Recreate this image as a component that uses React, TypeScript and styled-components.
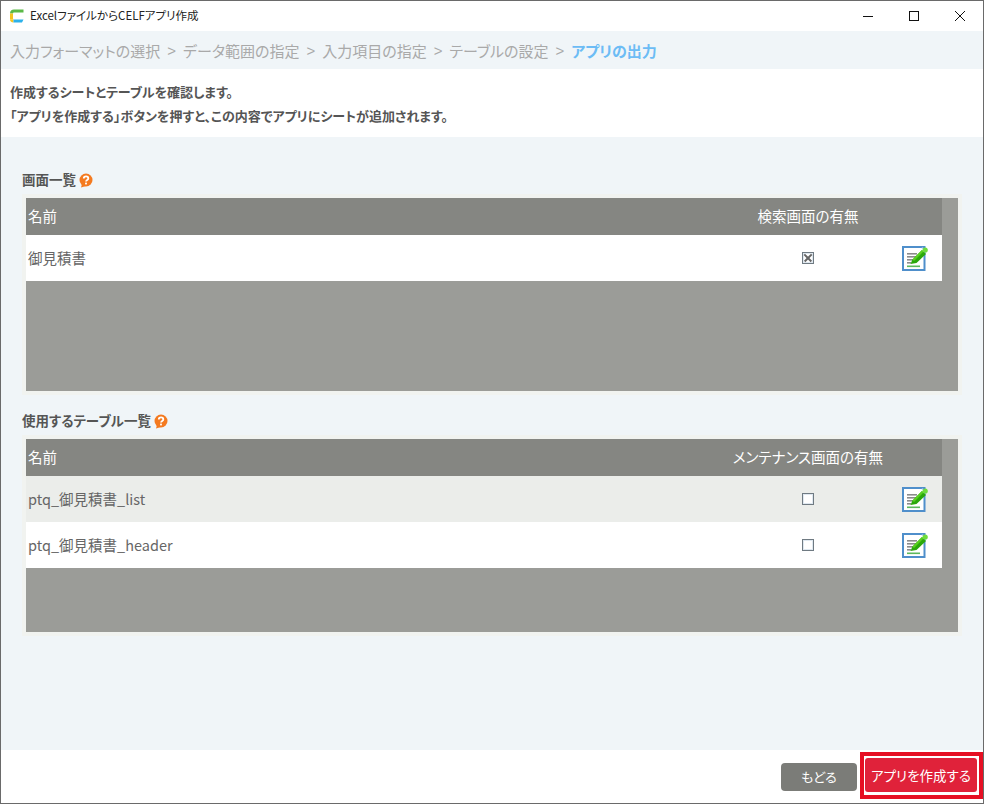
import * as React from "react"
import styled, {createGlobalStyle} from "styled-components";

const FONT = `"Noto Sans CJK JP", "Noto Sans", sans-serif`

const screens = [
  {name: '御見積書', checked: true},
]

const tables = [
  {name: 'ptq_御見積書_list', checked: false},
  {name: 'ptq_御見積書_header', checked: false},
]

const steps = ['入力フォーマットの選択', 'データ範囲の指定', '入力項目の指定', 'テーブルの設定']

const GlobalStyle = createGlobalStyle`
  html, body {
    margin: 0;
    padding: 0;
    background: #fff;
  }
  body {
    font-family: ${FONT};
    font-feature-settings: "palt";
  }
`

const LogoIcon = () => (
  <svg width="16" height="16" viewBox="0 0 16 16" style={{display: 'block'}}>
    <path d="M5 1.5 H14.5 V4.5 H4.5 L4 5.5 H1 C1 3 2.5 1.5 5 1.5Z" fill="#5bb947" />
    <path d="M1 5.5 H4 V10.5 L4.5 11.5 H1 Z" fill="#f4c41f" />
    <path d="M1 11.5 H4.5 V14.5 C2.5 14.5 1 13.5 1 11.5Z" fill="#f4c41f" />
    <path d="M4.5 11.5 H14.5 L13 14.5 H4.5Z" fill="#2cb1ea" />
  </svg>
)

const HelpIcon = () => (
  <svg width="14" height="15" viewBox="0 0 14 15" style={{display: 'block'}}>
    <path d="M3 11 L2 14.5 L7 13 Z" fill="#f47a20" />
    <circle cx="7" cy="7" r="6.5" fill="#f47a20" />
    <path d="M4.8 5.4 C4.8 2.8 9.3 2.8 9.3 5.4 C9.3 7 7 6.9 7 8.6" fill="none" stroke="#fff" strokeWidth="1.8" />
    <rect x="6.1" y="9.6" width="1.8" height="1.8" fill="#fff" />
  </svg>
)

const EditIcon = () => (
  <svg width="26" height="26" viewBox="0 0 26 26" style={{display: 'block'}}>
    <rect x="1" y="2" width="21.5" height="23" fill="#fff" stroke="#4f8fcb" strokeWidth="2" />
    <rect x="5" y="8" width="10" height="1.6" fill="#8b8b8b" />
    <rect x="5" y="11" width="10" height="1.6" fill="#8b8b8b" />
    <rect x="5" y="14" width="7" height="1.6" fill="#8b8b8b" />
    <rect x="5" y="17" width="4" height="1.6" fill="#8b8b8b" />
    <rect x="5" y="20.5" width="13" height="1.6" fill="#5cb85c" />
    <path d="M8.5 19 L10.5 14.5 L20 5 L24 9 L14.5 18 Z" fill="#2aa80a" />
    <path d="M10.5 14.5 L20 5 L21.5 6.5 L12 16 Z" fill="#58d01e" />
    <path d="M19.5 3 L20.5 2 L21.5 3 L20.5 4 Z" fill="#9fc4e6" />
    <circle cx="23.2" cy="5" r="2.6" fill="#6fdc3c" />
  </svg>
)

const TableBlock = ({title, column, rows, bodyHeight}: {title: string, column: string, rows: {name: string, checked: boolean}[], bodyHeight: number}) => (
  <Section>
    <SectionTitle>{title}<HelpIcon /></SectionTitle>
    <TableFrame>
      <TableInner $height={bodyHeight}>
        <HeaderRow>
          <NameCell>名前</NameCell>
          <FlagCell>{column}</FlagCell>
          <ActionCell />
        </HeaderRow>
        {rows.map((row, i) => (
          <Row key={row.name} $striped={rows.length > 1 && i === 0}>
            <NameCell>{row.name}</NameCell>
            <FlagCell><CheckBox $checked={row.checked} /></FlagCell>
            <ActionCell><EditIcon /></ActionCell>
          </Row>
        ))}
      </TableInner>
    </TableFrame>
  </Section>
)

const App = () => {
  return (
    <Window>
      <GlobalStyle />
      <TitleBar>
        <TitleLeft>
          <LogoIcon />
          <TitleText>ExcelファイルからCELFアプリ作成</TitleText>
        </TitleLeft>
        <WindowButtons>
          <WindowButton>
            <svg width="10" height="10" viewBox="0 0 10 10"><path d="M0 5.5 H10" stroke="#111" /></svg>
          </WindowButton>
          <WindowButton>
            <svg width="10" height="10" viewBox="0 0 10 10"><rect x="0.5" y="0.5" width="9" height="9" fill="none" stroke="#111" /></svg>
          </WindowButton>
          <WindowButton>
            <svg width="10" height="10" viewBox="0 0 10 10"><path d="M0 0 L10 10 M10 0 L0 10" stroke="#111" /></svg>
          </WindowButton>
        </WindowButtons>
      </TitleBar>

      <Breadcrumb>
        {steps.map(step => (
          <React.Fragment key={step}>
            <Step>{step}</Step>
            <Separator>&gt;</Separator>
          </React.Fragment>
        ))}
        <ActiveStep>アプリの出力</ActiveStep>
      </Breadcrumb>

      <Intro>
        <IntroLine>作成するシートとテーブルを確認します。</IntroLine>
        <IntroLine>「アプリを作成する」ボタンを押すと、この内容でアプリにシートが追加されます。</IntroLine>
      </Intro>

      <Content>
        <TableBlock title="画面一覧" column="検索画面の有無" rows={screens} bodyHeight={193} />
        <TableBlock title="使用するテーブル一覧" column="メンテナンス画面の有無" rows={tables} bodyHeight={193} />
      </Content>

      <Footer>
        <BackButton>もどる</BackButton>
        <Highlight>
          <CreateButton>アプリを作成する</CreateButton>
        </Highlight>
      </Footer>
    </Window>
  )
}

const Window = styled.div`
  width: 984px;
  height: 804px;
  box-sizing: border-box;
  border: 1px solid #6a6a6a;
  display: flex;
  flex-direction: column;
  background: #f0f5f8;
  overflow: hidden;
`
const TitleBar = styled.div`
  height: 30px;
  flex: none;
  background: #fff;
  display: flex;
  align-items: center;
  justify-content: space-between;
`
const TitleLeft = styled.div`
  display: flex;
  align-items: center;
  gap: 5px;
  padding-left: 8px;
`
const TitleText = styled.div`
  font-size: 11.5px;
  line-height: 1;
  color: #222;
`
const WindowButtons = styled.div`
  display: flex;
`
const WindowButton = styled.div`
  width: 46px;
  height: 30px;
  display: flex;
  align-items: center;
  justify-content: center;
`
const Breadcrumb = styled.div`
  height: 38px;
  flex: none;
  background: #f0f5f8;
  display: flex;
  align-items: center;
  gap: 7px;
  padding-left: 9px;
`
const Step = styled.span`
  font-size: 15px;
  line-height: 1;
  color: #a9a9a9;
`
const Separator = styled(Step)`
  font-family: "Liberation Sans", sans-serif;
`
const ActiveStep = styled.span`
  font-size: 15px;
  font-weight: 700;
  line-height: 1;
  color: #6cbcf5;
`
const Intro = styled.div`
  height: 68px;
  flex: none;
  box-sizing: border-box;
  background: #fff;
  padding: 11px 0 0 9px;
`
const IntroLine = styled.div`
  font-size: 13px;
  font-weight: 700;
  line-height: 24px;
  color: #555;
`
const Content = styled.div`
  flex: 1;
  background: #f0f5f8;
  padding: 33px 0 0 21px;
  display: flex;
  flex-direction: column;
  gap: 16px;
`
const Section = styled.section`
  width: 940px;
`
const SectionTitle = styled.div`
  height: 20px;
  padding-bottom: 4px;
  display: flex;
  align-items: center;
  gap: 3px;
  font-size: 13.5px;
  font-weight: 700;
  line-height: 1;
  color: #555;
`
const TableFrame = styled.div`
  border: 4px solid #f1f3f0;
`
const TableInner = styled.div<{$height: number}>`
  height: ${props => props.$height}px;
  background: #9b9c98;
`
const RowBase = styled.div`
  width: 916px;
  display: flex;
  align-items: center;
`
const HeaderRow = styled(RowBase)`
  height: 37px;
  background: #858682;
  font-size: 14.5px;
  line-height: 1;
  color: #fff;
`
const Row = styled(RowBase)<{$striped: boolean}>`
  height: 46px;
  background: ${props => props.$striped ? '#ebedea' : '#fff'};
  font-size: 14.5px;
  line-height: 1;
  color: #666;
`
const NameCell = styled.div`
  flex: 1;
  padding-left: 2px;
`
const FlagCell = styled.div`
  width: 160px;
  display: flex;
  justify-content: center;
`
const ActionCell = styled.div`
  width: 54px;
  display: flex;
  justify-content: center;
`
const CheckBox = styled.div<{$checked: boolean}>`
  width: 12px;
  height: 12px;
  box-sizing: border-box;
  border: 1px solid #6f7a82;
  box-shadow: inset 0 0 0 1px #dfe8f0;
  background: #fff;
  position: relative;

  &:before, &:after {
    content: '';
    display: ${props => props.$checked ? 'block' : 'none'};
    position: absolute;
    left: 0;
    top: 4px;
    width: 10px;
    height: 1.5px;
    background: #666;
    transform: rotate(45deg);
  }
  &:after {
    transform: rotate(-45deg);
  }
`
const Footer = styled.div`
  height: 53px;
  flex: none;
  background: #fff;
  display: flex;
  align-items: flex-start;
  justify-content: flex-end;
  gap: 3px;
  padding-top: 2px;
  box-sizing: border-box;
`
const BackButton = styled.div`
  width: 76px;
  height: 28px;
  margin-top: 11px;
  border-radius: 4px;
  background: #7b7c78;
  color: #fff;
  font-size: 13px;
  line-height: 28px;
  text-align: center;
`
const Highlight = styled.div`
  border: 4px solid #e60f23;
  padding: 2px 2px 3px 1px;
  background: #fff;
`
const CreateButton = styled.div`
  width: 112px;
  height: 34px;
  border-radius: 3px;
  background: #e0223a;
  color: #fff;
  font-size: 13.5px;
  line-height: 34px;
  text-align: center;
`

export default App
